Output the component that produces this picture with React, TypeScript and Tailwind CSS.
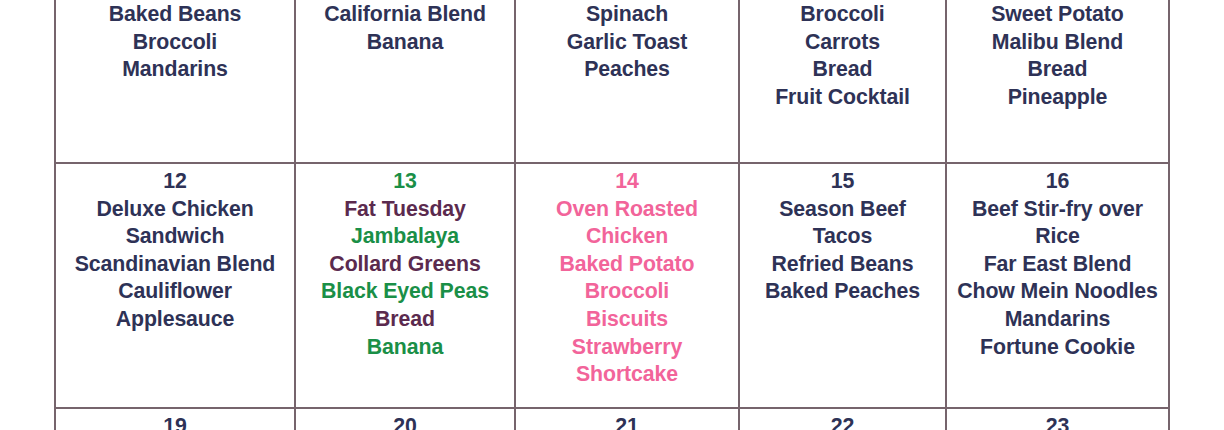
import React from "react";

type Line = { text: string; color?: string };
type Cell = { lines: Line[] };

const NAVY = "text-[#2e3256]";
const PURPLE = "text-[#5b2a4e]";
const GREEN = "text-[#1a8f47]";
const PINK = "text-[#f2649a]";

const n = (text: string): Line => ({ text, color: NAVY });

const topRow: Cell[] = [
  { lines: [n("Baked Beans"), n("Broccoli"), n("Mandarins")] },
  { lines: [n("California Blend"), n("Banana")] },
  { lines: [n("Spinach"), n("Garlic Toast"), n("Peaches")] },
  { lines: [n("Broccoli"), n("Carrots"), n("Bread"), n("Fruit Cocktail")] },
  { lines: [n("Sweet Potato"), n("Malibu Blend"), n("Bread"), n("Pineapple")] },
];

const midRow: Cell[] = [
  {
    lines: [n("12"), n("Deluxe Chicken"), n("Sandwich"), n("Scandinavian Blend"), n("Cauliflower"), n("Applesauce")],
  },
  {
    lines: [
      { text: "13", color: GREEN },
      { text: "Fat Tuesday", color: PURPLE },
      { text: "Jambalaya", color: GREEN },
      { text: "Collard Greens", color: PURPLE },
      { text: "Black Eyed Peas", color: GREEN },
      { text: "Bread", color: PURPLE },
      { text: "Banana", color: GREEN },
    ],
  },
  {
    lines: ["14", "Oven Roasted", "Chicken", "Baked Potato", "Broccoli", "Biscuits", "Strawberry", "Shortcake"].map(
      (t) => ({ text: t, color: PINK })
    ),
  },
  { lines: [n("15"), n("Season Beef"), n("Tacos"), n("Refried Beans"), n("Baked Peaches")] },
  {
    lines: [n("16"), n("Beef Stir-fry over"), n("Rice"), n("Far East Blend"), n("Chow Mein Noodles"), n("Mandarins"), n("Fortune Cookie")],
  },
];

const bottomRow: Cell[] = ["19", "20", "21", "22", "23"].map((d) => ({ lines: [n(d)] }));

const borders = [
  "border-l-2",
  "border-l-2",
  "border-l-2",
  "border-l-2",
  "border-l-2 border-r-2",
];

const Row = ({ cells, height, top }: { cells: Cell[]; height: string; top?: boolean }) => (
  <div className={`grid grid-cols-[240px_220px_224px_207px_225px] ${height}`}>
    {cells.map((c, i) => (
      <div
        key={i}
        className={`${borders[i]} border-[#76646c] flex flex-col items-center ${top ? "pt-px" : "pt-[4px]"}`}
      >
        {c.lines.map((l, j) => (
          <div key={j} className={`${l.color} leading-[27.6px] whitespace-nowrap`}>
            {l.text}
          </div>
        ))}
      </div>
    ))}
  </div>
);

export default function App() {
  return (
    <div className="w-[1224px] h-[430px] overflow-hidden bg-white">
      <div
        className="ml-[54px] w-[1116px] text-[21.3px] font-bold tracking-[-0.1px]"
        style={{ fontFamily: '"Liberation Sans", Arial, sans-serif' }}
      >
        <Row cells={topRow} height="h-[162px]" top />
        <div className="border-t-2 border-[#76646c]">
          <Row cells={midRow} height="h-[243px]" />
        </div>
        <div className="border-t-2 border-[#76646c]">
          <Row cells={bottomRow} height="h-[40px]" />
        </div>
      </div>
    </div>
  );
}
